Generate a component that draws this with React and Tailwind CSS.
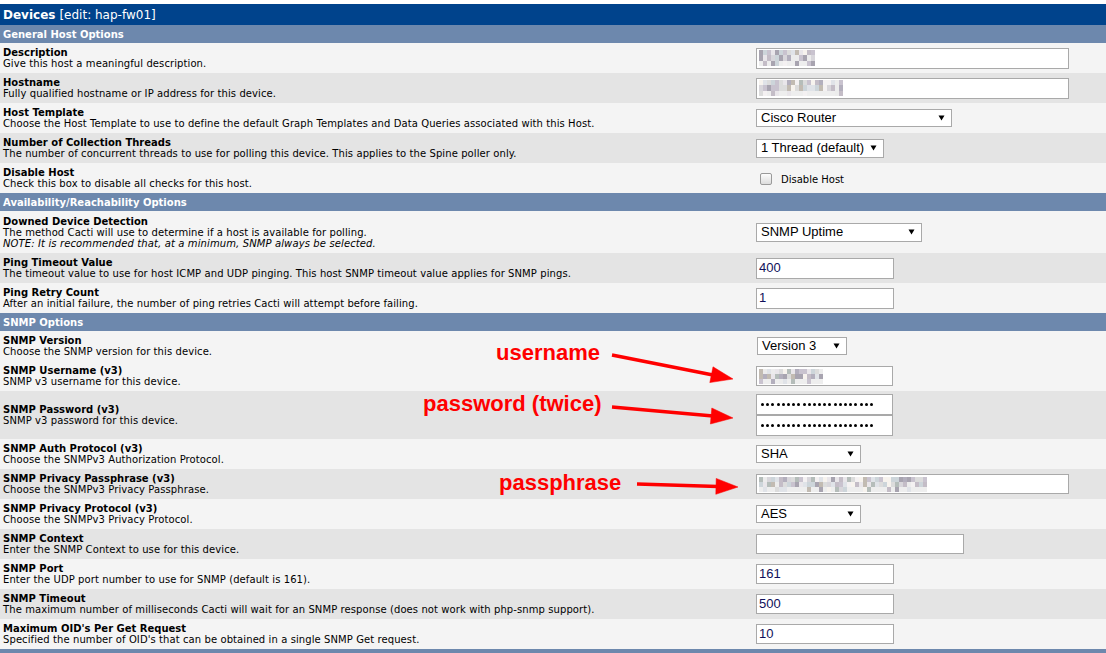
import React from "react";

const VF = "font-['DejaVu_Sans',Verdana,sans-serif]";

function rnd(seed) {
  let s = seed;
  return () => {
    s = (s * 9301 + 49297) % 233280;
    return s / 233280;
  };
}

const PALETTE = ["#b3afbd", "#c9c3cf", "#d8d6db", "#e9e6ea", "#f4f1f2", "#c2bbb2", "#a8a4b0", "#cdd5da", "#e0e3e8", "#c4bdc7", "#f7f3ee", "#b5bdba", "#dcdcdc", "#ececec"];

function Mosaic({ cols, rows, cw = 4, ch = 5, seed = 1 }) {
  const r = rnd(seed);
  const cells = [];
  for (let y = 0; y < rows; y++) {
    const row = [];
    for (let x = 0; x < cols; x++) {
      let c = PALETTE[Math.floor(r() * PALETTE.length)];
      if (y === rows - 1 && r() > 0.4) c = "#eeeeee";
      row.push(<div key={x} style={{ width: cw, height: ch, background: c }} />);
    }
    cells.push(
      <div key={y} className="flex">
        {row}
      </div>
    );
  }
  return <div className="flex flex-col">{cells}</div>;
}

function Section({ title }) {
  return (
    <div className={`h-[18px] bg-[#6d88ad] flex items-center pl-[3px] text-white font-bold text-[10px] ${VF}`}>
      {title}
    </div>
  );
}

function Row({ label, desc, note, dark, h = "h-[30px]", children }) {
  return (
    <div className={`flex ${h} ${dark ? "bg-[#e4e4e4]" : "bg-[#f4f4f4]"}`}>
      <div className={`w-[756px] shrink-0 pl-[3px] flex flex-col justify-center text-[10px] leading-[11px] text-black ${VF}`}>
        <div className="font-bold">{label}</div>
        <div className="tracking-[0.09px]">{desc}</div>
        {note && <div className="italic tracking-[0.12px]">{note}</div>}
      </div>
      <div className="flex flex-col justify-center">{children}</div>
    </div>
  );
}

function Input({ w = "w-[138px]", h = "h-[21px]", value, children }) {
  return (
    <div className={`${w} ${h} bg-white border border-[#a9a9a9] flex items-center pl-[2px] text-[13px] text-[#10105a] font-['Liberation_Sans',Arial,sans-serif]`}>
      {value}
      {children}
    </div>
  );
}

function Select({ w, h = "h-[18px]", value }) {
  return (
    <div className={`${w} ${h} bg-white border border-[#a9a9a9] flex items-center justify-between pl-[4px] pr-[6px] text-[13px] text-black font-['Liberation_Sans',Arial,sans-serif]`}>
      <span>{value}</span>
      <svg width="7" height="6" viewBox="0 0 7 6">
        <path d="M0.5 0.5 L6.5 0.5 L3.5 5.5 Z" fill="#000" />
      </svg>
    </div>
  );
}

function Dots() {
  return (
    <div className="flex gap-[2.2px] pl-[2px]">
      {Array.from({ length: 22 }).map((_, i) => (
        <div key={i} className="w-[3px] h-[3px] rounded-full bg-black" />
      ))}
    </div>
  );
}

export default function App() {
  return (
    <div className="relative w-[1106px] h-[653px] overflow-hidden bg-white pt-[4px]">
      <div className={`h-[21px] bg-[#00438c] flex items-center pl-[3px] text-white text-[12px] ${VF}`}>
        <span className="font-bold">Devices</span>
        <span className="ml-[4px]">[edit: hap-fw01]</span>
      </div>
      <Section title="General Host Options" />
      <Row label="Description" desc="Give this host a meaningful description.">
        <Input w="w-[313px]">
          <Mosaic cols={14} rows={3} cw={4} ch={5.5} seed={7} />
        </Input>
      </Row>
      <Row dark label="Hostname" desc="Fully qualified hostname or IP address for this device.">
        <Input w="w-[313px]">
          <Mosaic cols={21} rows={3} cw={4} ch={5.5} seed={13} />
        </Input>
      </Row>
      <Row label="Host Template" desc="Choose the Host Template to use to define the default Graph Templates and Data Queries associated with this Host.">
        <Select w="w-[196px]" value="Cisco Router" />
      </Row>
      <Row dark label="Number of Collection Threads" desc="The number of concurrent threads to use for polling this device. This applies to the Spine poller only.">
        <Select w="w-[128px]" h="h-[19px]" value="1 Thread (default)" />
      </Row>
      <Row label="Disable Host" desc="Check this box to disable all checks for this host.">
        <div className="flex items-center pl-[4px] pt-[2px]">
          <div className="w-[12px] h-[12px] rounded-[2px] border border-[#9a9a9a] bg-gradient-to-b from-[#fdfdfd] to-[#dcdcdc]" />
          <span className={`ml-[9px] text-[10px] text-black ${VF}`}>Disable Host</span>
        </div>
      </Row>
      <Section title="Availability/Reachability Options" />
      <Row
        h="h-[42px]"
        label="Downed Device Detection"
        desc="The method Cacti will use to determine if a host is available for polling."
        note="NOTE: It is recommended that, at a minimum, SNMP always be selected."
      >
        <Select w="w-[166px]" h="h-[19px]" value="SNMP Uptime" />
      </Row>
      <Row dark label="Ping Timeout Value" desc="The timeout value to use for host ICMP and UDP pinging. This host SNMP timeout value applies for SNMP pings.">
        <Input value="400" />
      </Row>
      <Row label="Ping Retry Count" desc="After an initial failure, the number of ping retries Cacti will attempt before failing.">
        <Input value="1" />
      </Row>
      <Section title="SNMP Options" />
      <Row label="SNMP Version" desc="Choose the SNMP version for this device.">
        <div className="pl-[1px]">
          <Select w="w-[90px]" value="Version 3" />
        </div>
      </Row>
      <Row label="SNMP Username (v3)" desc="SNMP v3 username for this device.">
        <Input w="w-[137px]" h="h-[20px]">
          <Mosaic cols={16} rows={3} cw={4} ch={5} seed={29} />
        </Input>
      </Row>
      <Row dark h="h-[48px]" label="SNMP Password (v3)" desc="SNMP v3 password for this device.">
        <Input w="w-[137px]">
          <Dots />
        </Input>
        <Input w="w-[137px]">
          <Dots />
        </Input>
      </Row>
      <Row label="SNMP Auth Protocol (v3)" desc="Choose the SNMPv3 Authorization Protocol.">
        <Select w="w-[105px]" value="SHA" />
      </Row>
      <Row dark label="SNMP Privacy Passphrase (v3)" desc="Choose the SNMPv3 Privacy Passphrase.">
        <Input w="w-[313px]" h="h-[20px]">
          <Mosaic cols={42} rows={3} cw={4} ch={5} seed={41} />
        </Input>
      </Row>
      <Row label="SNMP Privacy Protocol (v3)" desc="Choose the SNMPv3 Privacy Protocol.">
        <Select w="w-[105px]" value="AES" />
      </Row>
      <Row dark label="SNMP Context" desc="Enter the SNMP Context to use for this device.">
        <Input w="w-[208px]" h="h-[20px]" />
      </Row>
      <Row label="SNMP Port" desc="Enter the UDP port number to use for SNMP (default is 161).">
        <Input h="h-[20px]" value="161" />
      </Row>
      <Row dark label="SNMP Timeout" desc="The maximum number of milliseconds Cacti will wait for an SNMP response (does not work with php-snmp support).">
        <Input h="h-[20px]" value="500" />
      </Row>
      <Row label="Maximum OID's Per Get Request" desc="Specified the number of OID's that can be obtained in a single SNMP Get request.">
        <Input h="h-[20px]" value="10" />
      </Row>
      <Section title="" />

      <span className="absolute left-[496px] top-[342px] text-[22px] leading-[22px] font-bold text-[#ff0000] font-['Liberation_Sans',Arial,sans-serif]">
        username
      </span>
      <span className="absolute left-[423px] top-[393px] text-[22px] leading-[22px] font-bold text-[#ff0000] font-['Liberation_Sans',Arial,sans-serif]">
        password (twice)
      </span>
      <span className="absolute left-[499px] top-[472px] text-[22px] leading-[22px] font-bold text-[#ff0000] font-['Liberation_Sans',Arial,sans-serif]">
        passphrase
      </span>
      <svg className="absolute left-0 top-0 pointer-events-none" width="1106" height="653">
        <g fill="#ff0000" stroke="#ff0000">
          <line x1="612" y1="355" x2="713" y2="375" strokeWidth="3.5" />
          <polygon points="733,379 713,366.8 709.8,382.6" strokeWidth="0.5" />
          <line x1="612" y1="407" x2="713" y2="416" strokeWidth="3.5" />
          <polygon points="733,418 711.8,408 710.4,424" strokeWidth="0.5" />
          <line x1="637" y1="484" x2="718" y2="486.4" strokeWidth="3.5" />
          <polygon points="738,487 716.2,478.4 715.8,494.3" strokeWidth="0.5" />
        </g>
      </svg>
    </div>
  );
}
